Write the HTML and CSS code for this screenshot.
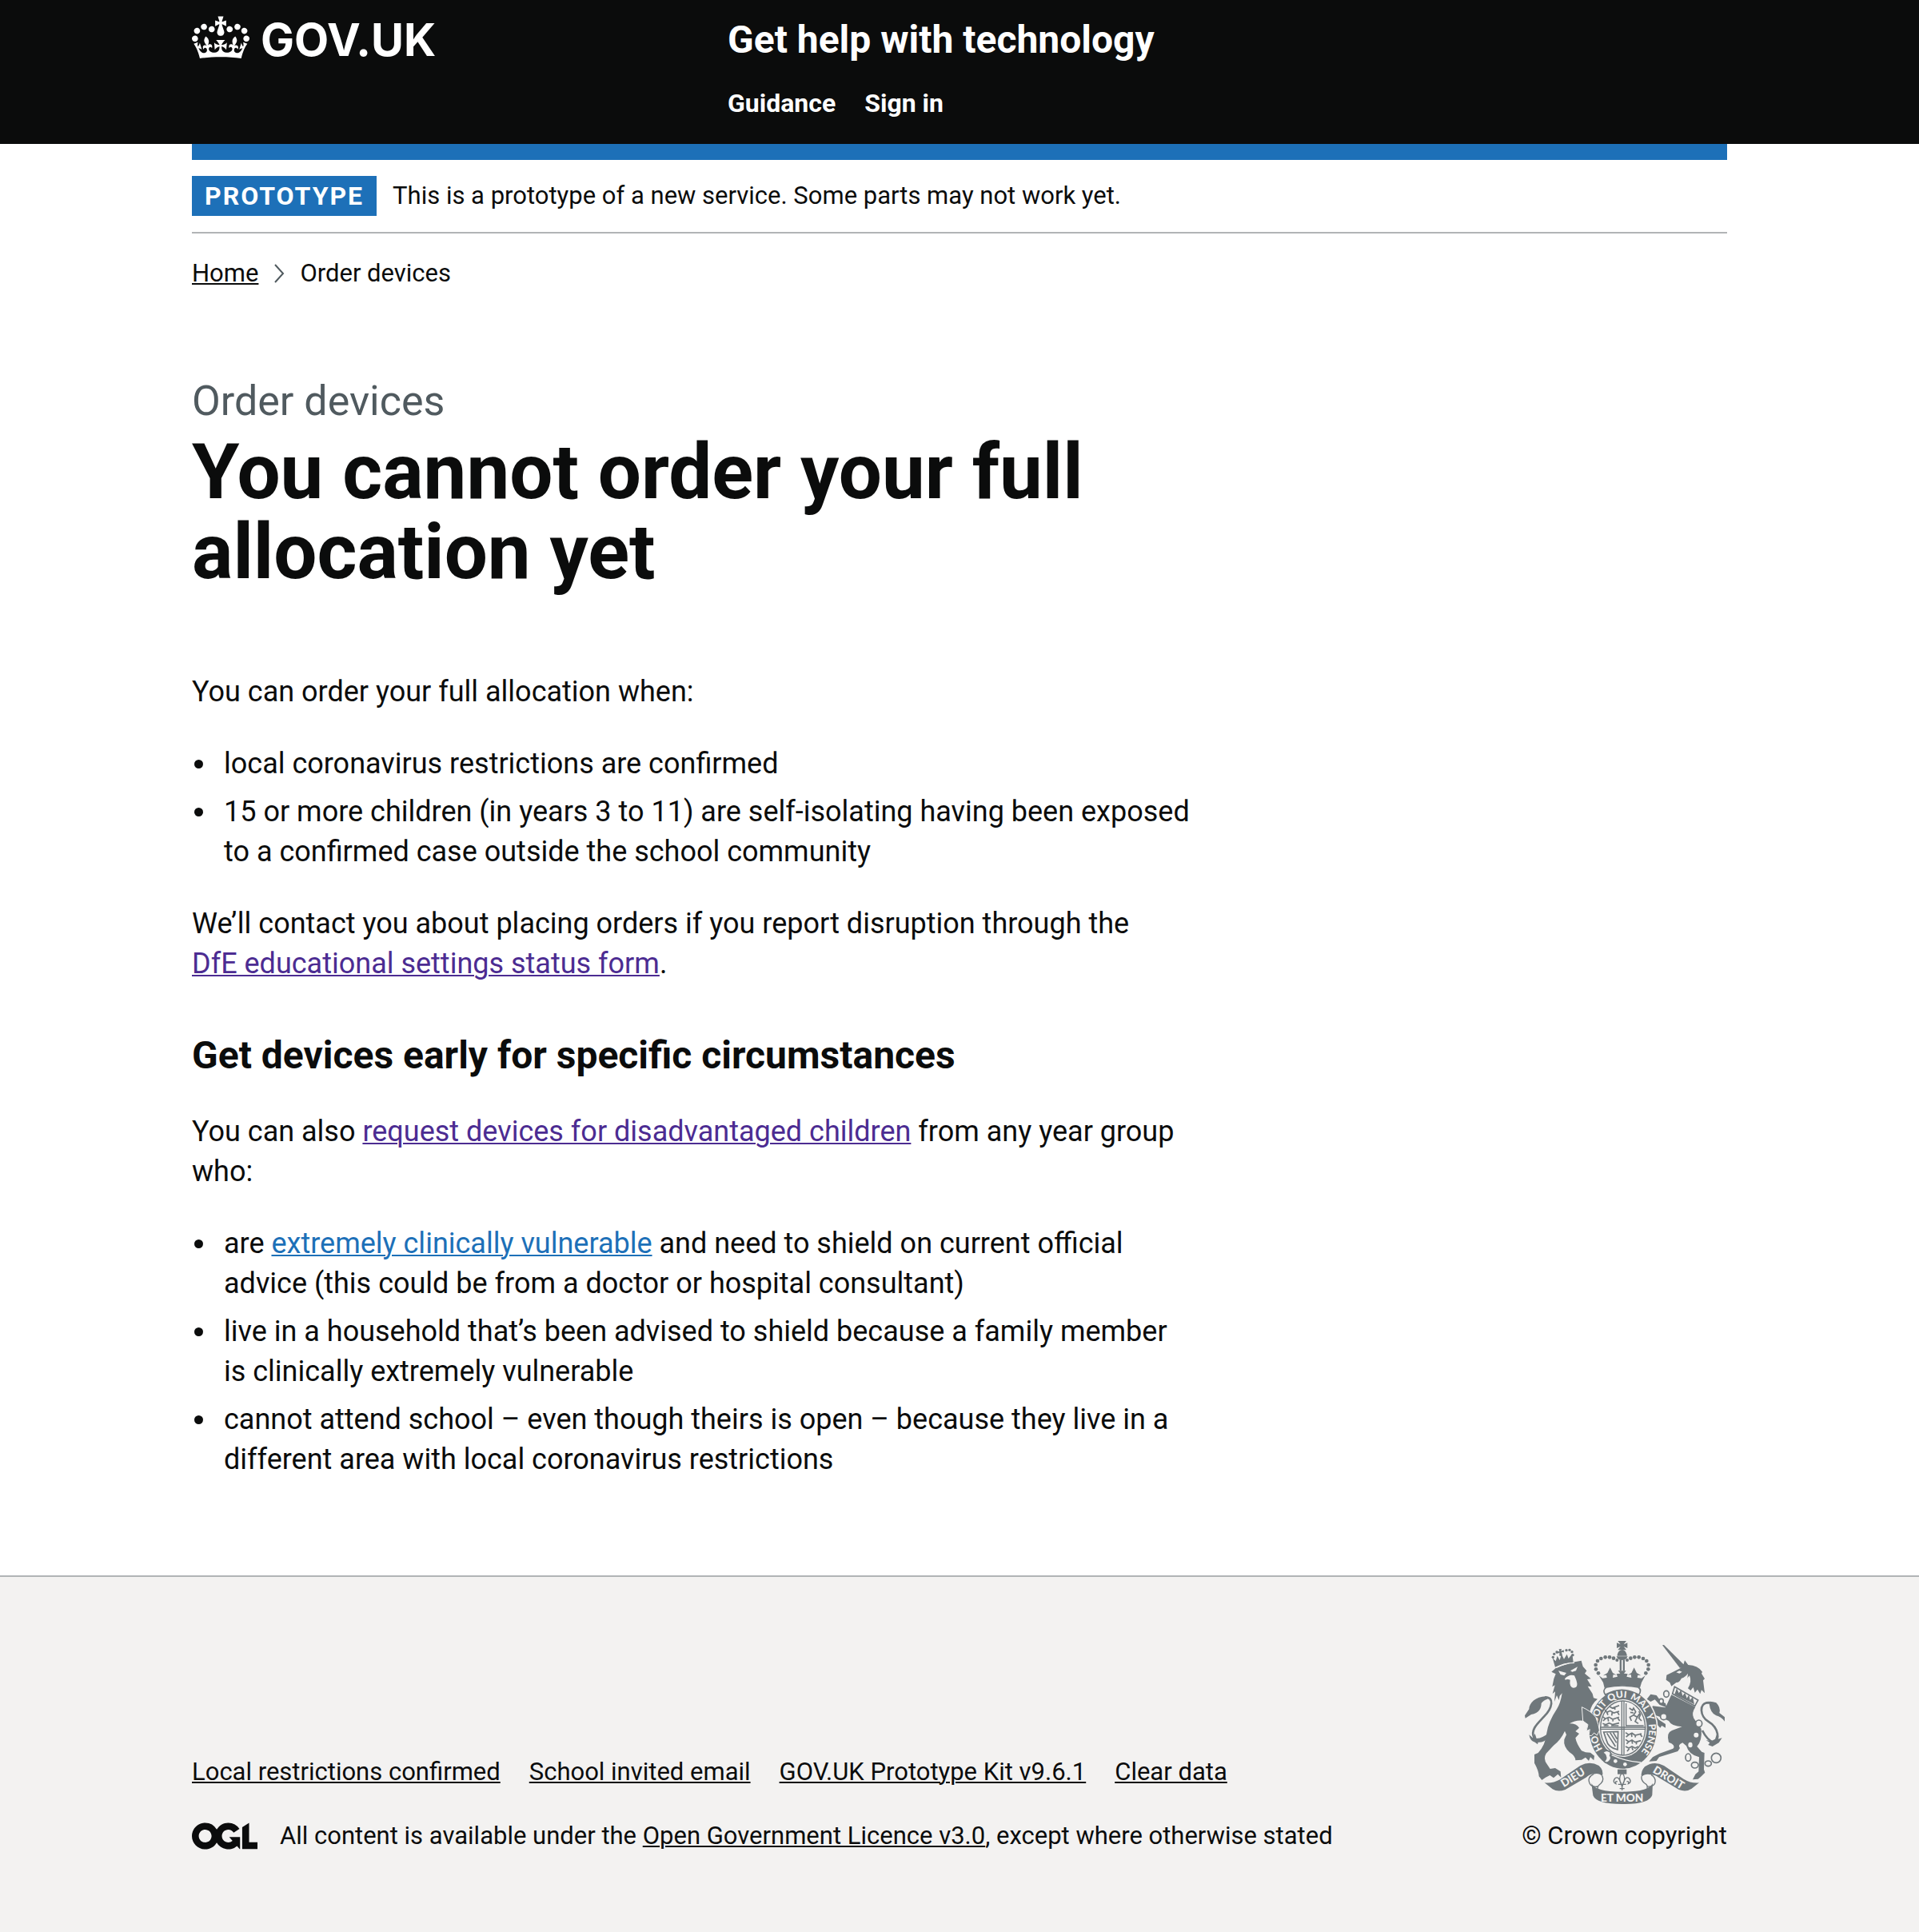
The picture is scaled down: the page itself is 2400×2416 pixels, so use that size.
FILE: index.html
```html
<!DOCTYPE html>
<html lang="en">
<head>
<meta charset="utf-8">
<meta name="viewport" content="width=device-width, initial-scale=1">
<title>You cannot order your full allocation yet</title>
<link rel="stylesheet" href="styles.css">
</head>
<body>
<header class="header">
  <div class="header-inner">
    <a class="logo" href="#">
      <svg class="logo-crown" viewBox="0 0 132 97" aria-hidden="true"><path fill="currentColor" fill-rule="evenodd" d="M25 30.2c3.5 1.5 7.7-.2 9.1-3.7 1.5-3.6-.2-7.8-3.9-9.2-3.6-1.4-7.6.3-9.1 3.9-1.4 3.5.3 7.5 3.9 9zM9 39.5c3.6 1.5 7.8-.2 9.2-3.7 1.5-3.6-.2-7.8-3.9-9.1-3.6-1.5-7.6.2-9.1 3.8-1.4 3.5.3 7.5 3.8 9zM4.4 57.2c3.5 1.5 7.7-.2 9.1-3.8 1.5-3.6-.2-7.7-3.9-9.1-3.5-1.5-7.6.3-9.1 3.8-1.4 3.5.3 7.6 3.9 9.1zm38.3-21.4c3.5 1.5 7.7-.2 9.1-3.8 1.5-3.6-.2-7.7-3.9-9.1-3.6-1.5-7.6.3-9.1 3.8-1.3 3.6.4 7.7 3.9 9.1zm64.4-5.6c-3.6 1.5-7.8-.2-9.1-3.7-1.5-3.6.2-7.8 3.8-9.2 3.6-1.4 7.7.3 9.2 3.9 1.3 3.5-.4 7.5-3.9 9zm15.9 9.3c-3.6 1.5-7.7-.2-9.1-3.7-1.5-3.6.2-7.8 3.7-9.1 3.6-1.5 7.7.2 9.2 3.8 1.5 3.5-.3 7.5-3.8 9zm4.7 17.7c-3.6 1.5-7.8-.2-9.2-3.8-1.5-3.6.2-7.7 3.9-9.1 3.6-1.5 7.7.3 9.2 3.8 1.3 3.5-.4 7.6-3.9 9.1zM89.3 35.8c-3.6 1.5-7.8-.2-9.2-3.8-1.4-3.6.2-7.7 3.9-9.1 3.6-1.5 7.7.3 9.2 3.8 1.4 3.6-.3 7.7-3.9 9.1zM69.7 17.7l8.9 4.7V9.3l-8.9 2.8c-.2-.3-.5-.6-.9-.9L72.4 0H59.6l3.5 11.2c-.3.3-.6.5-.9.9l-8.8-2.8v13.1l8.8-4.7c.3.3.6.7.9.9l-5 15.4v.1c-.2.8-.4 1.6-.4 2.4 0 4.1 3.1 7.5 7 8.1h.2c.3 0 .7.1 1 .1.4 0 .7 0 1-.1h.2c4-.6 7.1-4.1 7.1-8.1 0-.8-.1-1.7-.4-2.4V34l-5.1-15.4c.4-.2.7-.6 1-.9zM66 92.8c16.9 0 32.8 1.1 47.1 3.2 4-16.9 8.9-26.7 14-33.5l-9.6-3.4c1 4.9 1.1 7.2 0 10.2-1.5-1.4-3-4.3-4.2-8.7L108.6 76c2.8-2 5-3.2 7.5-3.3-4.4 9.4-10 11.9-13.6 11.2-4.3-.8-6.3-4.6-5.6-7.9 1-4.7 5.7-5.9 8-.5 4.3-8.7-3-11.4-7.6-8.8 7.1-7.2 7.9-13.5 2.1-21.1-8 6.1-8.1 12.3-4.5 20.8-4.7-5.4-12.1-2.5-9.5 6.2 3.4-5.2 7.9-2 7.2 3.1-.6 4.3-6.4 7.8-13.5 7.2-10.3-.9-10.9-8-11.2-13.8 2.5-.5 7.1 1.8 11 7.3L80.2 60c-4.1 4.4-8 5.3-12.3 5.4 1.4-4.4 8-11.6 8-11.6H55.5s6.4 7.2 7.9 11.6c-4.2-.1-8-1-12.3-5.4l1.4 16.4c3.9-5.5 8.5-7.7 10.9-7.3-.3 5.8-.9 12.8-11.1 13.8-7.2.6-12.9-2.9-13.5-7.2-.7-5 3.8-8.3 7.1-3.1 2.7-8.7-4.6-11.6-9.4-6.2 3.7-8.5 3.6-14.7-4.6-20.8-5.8 7.6-5 13.9 2.2 21.1-4.7-2.6-11.9.1-7.7 8.8 2.3-5.5 7.1-4.2 8.1.5.7 3.3-1.3 7.1-5.7 7.9-3.5.7-9-1.8-13.5-11.2 2.5.1 4.7 1.3 7.5 3.3l-4.7-15.4c-1.2 4.4-2.7 7.2-4.3 8.7-1.1-3-.9-5.3 0-10.2l-9.5 3.4c5 6.9 9.9 16.7 14 33.5 14.8-2.1 30.8-3.2 47.7-3.2z"/></svg>
      <span class="logo-text">GOV.UK</span>
    </a>
    <div class="header-content">
      <a class="service-name" href="#">Get help with technology</a>
      <nav class="header-nav" aria-label="Top level navigation">
        <a href="#">Guidance</a>
        <a href="#">Sign in</a>
      </nav>
    </div>
  </div>
</header>

<div class="container">
  <div class="phase-banner">
    <strong class="tag">Prototype</strong>
    <span>This is a prototype of a new service. Some parts may not work yet.</span>
  </div>
  <nav class="breadcrumbs" aria-label="Breadcrumb">
    <a class="plain-link" href="#">Home</a>
    <svg class="chevron" viewBox="0 0 14 24" aria-hidden="true"><path d="M2 1l10 11L2 23" fill="none" stroke="currentColor" stroke-width="2"/></svg>
    <span>Order devices</span>
  </nav>
  <main class="main">
    <span class="caption">Order devices</span>
    <h1>You cannot order your full allocation yet</h1>
    <p>You can order your full allocation when:</p>
    <ul>
      <li>local coronavirus restrictions are confirmed</li>
      <li>15 or more children (in years 3 to 11) are self-isolating having been exposed to a confirmed case outside the school community</li>
    </ul>
    <p>We’ll contact you about placing orders if you report disruption through the <a class="visited" href="#">DfE&nbsp;educational settings status form</a>.</p>
    <h2>Get devices early for specific circumstances</h2>
    <p>You can also <a class="visited" href="#">request devices for disadvantaged children</a> from any year group who:</p>
    <ul>
      <li>are <a href="#">extremely clinically vulnerable</a> and need to shield on current official advice (this could be from a doctor or hospital consultant)</li>
      <li>live in a household that’s been advised to shield because a family member is&nbsp;clinically extremely vulnerable</li>
      <li>cannot attend school – even though theirs is open – because they live in a different area with local coronavirus restrictions</li>
    </ul>
  </main>
</div>

<footer class="footer">
  <div class="footer-inner">
    <div class="footer-meta">
      <nav class="footer-links" aria-label="Support links">
        <a class="plain-link" href="#">Local restrictions confirmed</a>
        <a class="plain-link" href="#">School invited email</a>
        <a class="plain-link" href="#">GOV.UK Prototype Kit v9.6.1</a>
        <a class="plain-link" href="#">Clear data</a>
      </nav>
      <div class="licence">
        <svg class="licence-logo" viewBox="0 0 483.2 195.7" aria-hidden="true"><path fill="currentColor" d="M421.5 142.8V.1l-50.7 32.3v161.1h112.4v-50.7zm-122.3-9.6A47.12 47.12 0 0 1 221 97.8c0-26 21.1-47.1 47.1-47.1 16.7 0 31.4 8.7 39.7 21.8l42.7-27.2A97.63 97.63 0 0 0 268.1 0c-36.5 0-68.3 20.1-85.1 49.7A98 98 0 0 0 97.8 0C43.9 0 0 43.9 0 97.8s43.9 97.8 97.8 97.8c36.5 0 68.3-20.1 85.1-49.7a97.76 97.76 0 0 0 149.6 25.4l19.4 22.2h3v-87.8h-80l24.3 27.5zM97.8 145c-26 0-47.1-21.1-47.1-47.1s21.1-47.1 47.1-47.1 47.1 21.1 47.1 47.1S123.8 145 97.8 145"/></svg>
        <span>All content is available under the <a class="plain-link" href="#">Open Government Licence v3.0</a>, except where otherwise stated</span>
      </div>
    </div>
    <a class="copyright" href="#">
      <svg class="arms" viewBox="72 66 750 612" aria-hidden="true">
        <defs>
          <path id="garter" d="M440 515A98 118 0 0 1 440 279A98 118 0 0 1 440 515"/>
        </defs>
        <!-- lion -->
        <g class="ink">
          <path d="M172 182L188 168Q235 148 284 140L290 162L304 178L297 188L320 208L306 210L323 238L308 236L326 264L330 280L345 284Q322 302 316 332L334 346L346 372L350 396L343 418L332 410L322 420L312 418L316 396L303 402L309 378L290 365Q262 362 240 376Q266 376 276 392L262 405L276 414L262 430Q266 452 285 478L300 484L318 485L333 497L331 514L318 502L312 516L300 503L285 512L262 514Q262 498 240 484Q216 462 220 436L228 418L222 404Q208 436 180 458L152 488Q140 508 155 528L167 546L186 543L206 556L208 578L196 566L180 580L166 570L150 578L136 588L125 574Q124 552 108 524L108 492L122 486Q150 456 154 412Q160 370 192 322Q206 300 212 262L203 272L200 288L192 270L183 294L186 256L176 264L185 232L175 238L181 208L188 190Z"/>
          <path d="M186 164L176 130L188 142L194 122L203 138L210 116L219 134L230 116L236 132L250 114L254 146Q216 148 186 164Z"/>
          <circle cx="178" cy="127" r="5"/><circle cx="182" cy="115" r="5"/><circle cx="192" cy="108" r="5"/><circle cx="228" cy="101" r="5"/><circle cx="240" cy="100" r="5"/><circle cx="249" cy="107" r="5"/><circle cx="252" cy="119" r="5"/>
          <path d="M200 97L210 96L208 104L218 100L219 109L210 108L213 122H202L202 110L194 113L193 105L202 106Z"/>
          <path d="M152 274C112 274 88 300 88 322L72 346L74 356L96 342C126 338 134 318 134 300Q142 288 158 284Z"/>
          <path d="M88 418L102 430L110 414L116 432Q140 430 162 410L158 432Q142 448 122 446L120 454L110 446Q92 442 88 418Z"/>
        </g>
        <g class="line thick"><path d="M106 428C92 398 124 372 144 350C176 318 184 276 148 277"/></g>
        <g class="paper"><path d="M198 178L228 186L220 196L206 192ZM243 178L270 163L264 178L250 182ZM222 208Q238 190 258 196L264 210Q276 242 254 242Q238 238 242 212Q232 208 224 212Z"/></g>
        <g class="line light"><path d="M190 166Q228 148 258 148"/></g>
        <!-- unicorn -->
        <g class="ink">
          <path d="M588 82L594 81L672 158L654 168Z"/>
          <path d="M656 168L668 152L672 139L685 156Q722 158 738 182L735 188L747 208L741 214L747 262L735 250L730 265L720 248L710 260L704 240L694 252L684 244Q700 220 690 196Q672 222 640 222L622 236L616 222L602 212L604 194Q634 180 656 168Z"/>
          <path d="M622 268L712 314Q696 336 706 356L734 396Q738 440 718 462L736 482L746 486L744 548L748 560L732 576L722 584L702 586L712 566L724 556L726 502Q688 494 678 460L664 448Q644 456 654 468L646 480L576 502L566 516L538 518L552 502L578 488L628 470Q640 456 612 446Q602 410 624 402L662 388Q622 386 612 366L582 352L560 344L576 362L600 378V392L586 384L580 392L552 362L540 330L552 310L600 316Z"/>
          <path d="M530 284L544 266L566 270L582 292L600 300L604 316L578 306L560 286L544 294Z"/>
          <path d="M742 300Q764 288 790 298Q808 316 802 336L822 352V368Q808 350 790 346Q768 336 764 302Z"/>
          <path d="M752 438L772 442L786 434L792 416L797 434L812 430L800 448L776 462L760 456L766 448Z"/>
        </g>
        <g class="line thick"><path d="M762 297C722 298 730 350 760 368C800 392 806 440 780 446M738 402Q756 438 782 448"/></g>
        <g class="band"><path d="M634 238L722 288L710 310L626 264Z"/></g>
        <g class="ink"><path d="M634 266L642 244L650 262L658 250L664 272L673 260L680 281L688 268L692 288L702 276L708 304Z"/></g>
        <g class="paper"><path d="M640 184L652 178L662 182L652 188ZM660 206Q674 202 684 188L682 208Q666 224 644 224Q656 216 660 206Z"/></g>
        <g class="chain">
          <ellipse cx="603" cy="265" rx="10" ry="12"/><ellipse cx="593" cy="350" rx="12" ry="12"/><ellipse cx="584" cy="292" rx="8" ry="9"/>
          <ellipse cx="725" cy="376" rx="12" ry="13"/><ellipse cx="685" cy="503" rx="10" ry="14"/><ellipse cx="710" cy="532" rx="13" ry="11"/><ellipse cx="760" cy="526" rx="12" ry="10"/><circle cx="790" cy="505" r="18"/>
        </g>
        <g class="paper"><circle cx="715" cy="419" r="9"/><ellipse cx="693" cy="456" rx="8" ry="10"/></g>
        <!-- garter and shield -->
        <ellipse cx="440" cy="397" rx="132" ry="152" class="paper"/>
        <ellipse cx="440" cy="397" rx="127" ry="148" class="ink"/>
        <ellipse cx="440" cy="393" rx="90" ry="108" class="paper"/>
        <g class="motto">
          <text><textPath href="#garter" startOffset="90">HO</textPath></text>
          <text><textPath href="#garter" startOffset="194">SOIT</textPath></text>
          <text><textPath href="#garter" startOffset="286">QUI</textPath></text>
          <text><textPath href="#garter" startOffset="366">MAL</textPath></text>
          <text><textPath href="#garter" startOffset="454">Y</textPath></text>
          <text><textPath href="#garter" startOffset="490">PENSE</textPath></text>
        </g>
        <ellipse cx="440" cy="393" rx="84" ry="102" class="line"/>
        <g class="line"><path d="M436 292V494M444 292V494M354 390H526M354 397H526M452 300V384H518"/></g>
        <g class="line charge">
          <path d="M372 324l8 10l12-6l14 8l20-6M380 334l4 10M400 334l-2 12M418 330l8 14M364 350l10 8l14-6l14 8l24-8M366 366l8-8M384 356l2 12M404 358l-2 10M420 354l8 12M364 376l12 4l12-6l14 6l24-6M390 312l10 6l26-10M410 314v10M368 384h18M396 384h28"/>
          <path d="M464 318l12 8l4-8l8 14l-8 12l14 8l8-12M480 344l-14 8l6 14M494 352l-8 16l12 8M468 334l12 2M500 330l6 12l-6 14l10 10"/>
          <path d="M450 410l12 8l12-6l12 8l24-6M452 426l10-8M472 414l2 12M488 418l-2 10M504 414l8 12M450 436l12 8l12-6l12 8l22-6M454 452l8-8M474 440l2 12M492 444l-2 10M450 462l12 6l12-6l12 6l12-6M456 480l8-10M474 466l4 10"/>
          <path d="M368 408l54-2l-2 68q-36-8-42-36zM380 412l32 50M392 410l24 38M404 410l14 24"/>
        </g>
        <g class="ink"><path d="M350 480L374 476L390 496L404 506L390 520L376 526L362 514Z"/></g>
        <g class="band"><path d="M364 486Q374 472 388 480Q398 484 392 496Q400 506 390 516Q378 528 370 518Q380 508 376 500Q374 490 364 486Z"/></g>
        <g class="paper"><circle cx="412" cy="517" r="7"/><circle cx="448" cy="529" r="7"/></g>
        <g class="line light"><path d="M398 494Q450 518 508 522"/></g>
        <!-- lion's forearm, over the garter -->
        <path class="foreleg" d="M286 314Q322 330 338 352L348 380L352 402L343 420L332 411L322 422L312 420L316 398L303 404L309 380L290 366Z"/>
        <!-- crown -->
        <g class="ink">
          <path d="M421 66H453L443 79L457 73V93L443 87L453 100H421L431 87L417 93V73L431 79ZM419 118Q423 100 437 100Q451 100 455 118V122H419ZM416 124H458Q454 138 437 138Q420 138 416 124Z"/>
          <path d="M428 136h7v42h-7zM440 136h7v42h-7z"/>
          <path d="M350 196L364 206L380 204L378 194L366 196L382 186L392 166L402 186L416 194L404 192L402 204L420 200L416 190L430 188L422 178H452L444 188L458 190L454 200L472 204L470 192L458 194L472 186L482 166L492 186L508 196L496 194L494 204L510 206L524 196L510 222L504 242Q440 224 371 242L366 222Z"/>
          <circle cx="348" cy="187" r="7"/><circle cx="339" cy="172" r="7"/><circle cx="338" cy="156" r="7"/><circle cx="345" cy="141" r="7"/><circle cx="358" cy="132" r="7"/><circle cx="374" cy="127" r="7"/><circle cx="390" cy="127" r="7"/><circle cx="405" cy="131" r="7"/><circle cx="418" cy="138" r="6"/>
          <circle cx="526" cy="187" r="7"/><circle cx="535" cy="172" r="7"/><circle cx="536" cy="156" r="7"/><circle cx="529" cy="141" r="7"/><circle cx="516" cy="132" r="7"/><circle cx="500" cy="127" r="7"/><circle cx="484" cy="127" r="7"/><circle cx="469" cy="131" r="7"/><circle cx="456" cy="138" r="6"/>
        </g>
        <g class="band"><path d="M378 240Q437 228 498 240Q512 250 500 268Q468 250 437 250T374 268Q362 250 378 240Z"/></g>
        <!-- ribbon -->
        <g class="ink">
          <path d="M146 598Q176 602 204 586L280 534Q316 514 350 534Q370 552 362 574Q350 560 330 566Q320 564 302 578L224 624Q196 634 176 622Z"/>
          <path d="M726 598Q698 602 668 584L594 534Q556 514 522 538Q506 556 510 576Q524 562 546 568Q558 568 574 578L650 624Q678 634 698 620Z"/>
          <path d="M322 600Q336 632 437 632Q538 632 552 600L550 644Q540 678 437 678Q340 678 328 646Z"/>
          <path d="M420 548h34v18h-34z"/>
        </g>
        <g class="line"><path d="M330 566Q304 578 316 602Q324 616 346 612M362 572Q370 588 358 600Q342 612 346 622M546 568Q566 580 560 600Q554 614 532 612M510 574Q508 590 522 600Q536 608 530 620"/></g>
        <g class="line"><path d="M437 560q-16 20-4 40l4 14l4-14q12-20-4-40zM432 600q-8-30-22-18q-10 14 4 20q-4-12 6-8M442 600q8-30 22-18q10 14-4 20q4-12-6-8M422 604h30M437 606v20M428 620h18"/></g>
        <g class="words">
          <text x="437" y="669" text-anchor="middle">ET MON</text>
          <text transform="translate(218 616) rotate(-32)">DIEU</text>
          <text transform="translate(550 558) rotate(31)">DROIT</text>
        </g>
      </svg>
      <span>© Crown copyright</span>
    </a>
  </div>
</footer>
</body>
</html>
```
FILE: styles.css
```css
*, *::before, *::after { box-sizing: border-box; }

body {
  margin: 0;
  background: #fff;
  color: #0b0c0c;
  font-family: Roboto, "Liberation Sans", sans-serif;
  font-size: 36px;
  line-height: 50px;
}

a {
  color: #1d70b8;
  text-decoration: underline;
  text-decoration-thickness: 2px;
  text-underline-offset: 2px;
}
.visited { color: #4c2c92; }
.plain-link { color: inherit; }
svg { display: block; flex: none; }

/* Header */
.header {
  padding: 20px 10% 31px;
  background: #0b0c0c;
  color: #fff;
}
.header a { color: inherit; text-decoration: none; }
.header-inner {
  display: grid;
  grid-template-columns: 67fr 125fr;
  align-items: start;
}
.logo {
  display: flex;
  gap: 14px;
  line-height: 60px;
}
.logo-crown { width: 72px; height: 54px; }
.logo-text {
  font-family: Inter, "Liberation Sans", sans-serif;
  font-size: 56px;
  font-weight: 700;
}
.service-name {
  display: block;
  font-size: 48px;
  font-weight: 700;
  line-height: 60px;
}
.header-nav {
  display: flex;
  gap: 36px;
  margin-top: 29px;
  font-size: 32px;
  font-weight: 700;
  line-height: 40px;
}

/* Banner and breadcrumbs */
.container {
  margin: 0 10%;
  border-top: 20px solid #1d70b8;
}
.phase-banner {
  display: flex;
  align-items: center;
  gap: 20px;
  padding: 20px 0;
  border-bottom: 2px solid #b1b4b6;
  font-size: 31px;
  line-height: 40px;
}
.tag {
  padding: 5px 16px;
  background: #1d70b8;
  color: #fff;
  font-size: 32px;
  font-weight: 700;
  letter-spacing: 2px;
  text-transform: uppercase;
}
.breadcrumbs {
  display: flex;
  align-items: center;
  gap: 19px;
  margin-top: 30px;
  font-size: 31px;
  line-height: 40px;
}
.chevron { width: 14px; height: 24px; color: #505a5f; }

/* Main content */
.main {
  max-width: calc(66.67% - 20px);
  padding: 110px 0 80px;
}
.caption {
  display: block;
  margin-bottom: 8px;
  color: #505a5f;
  font-size: 52px;
  line-height: 60px;
}
h1 {
  margin: 0 0 100px;
  font-size: 96px;
  line-height: 100px;
}
h2 {
  margin: 60px 0 40px;
  font-size: 48px;
  line-height: 60px;
}
p { margin: 0 0 40px; }
ul { margin: 0 0 40px; padding-left: 32px; }
li { padding-left: 8px; }
li + li { margin-top: 10px; }

/* Footer */
.footer {
  padding: 80px 10% 100px;
  border-top: 2px solid #b1b4b6;
  background: #f3f2f1;
  font-size: 31px;
  line-height: 40px;
}
.footer-inner {
  display: flex;
  justify-content: space-between;
  align-items: flex-end;
}
.footer-links {
  display: flex;
  flex-wrap: wrap;
  gap: 36px;
  margin-bottom: 40px;
}
.licence { display: flex; align-items: center; gap: 28px; }
.licence-logo { width: 82px; height: 34px; }
.copyright {
  display: flex;
  flex-direction: column;
  align-items: center;
  gap: 20px;
  color: inherit;
  text-decoration: none;
}

/* Coat of arms */
.arms { width: 250px; height: 204px; color: #6f777b; }
.ink { fill: currentColor; }
.paper { fill: #f3f2f1; }
.line { fill: none; stroke: currentColor; stroke-width: 4; }
.thick { stroke-width: 8; }
.light { stroke: #f3f2f1; }
.charge { stroke-width: 5; }
.foreleg { fill: currentColor; stroke: #f3f2f1; stroke-width: 3; }
.band, .chain { fill: #f3f2f1; stroke: currentColor; stroke-width: 5; }
.motto, .words {
  fill: #f3f2f1;
  font-family: Lato, Roboto, sans-serif;
  font-weight: 900;
}
.motto { font-size: 36px; }
.words { font-size: 41px; }
```
